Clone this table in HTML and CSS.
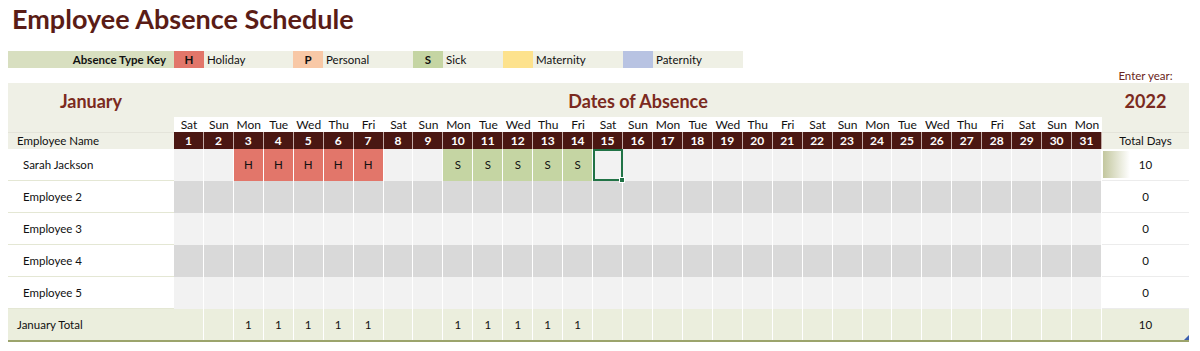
FILE: index.html
```html
<!DOCTYPE html>
<html>
<head>
<meta charset="utf-8">
<link rel="stylesheet" href="styles.css">
</head>
<body>
<h1 class="title">Employee Absence Schedule</h1>
<div class="key">
  <div class="key-label">Absence Type Key</div>
  <div class="sw hol">H</div><div class="kt w89">Holiday</div>
  <div class="sw per">P</div><div class="kt">Personal</div>
  <div class="sw sick">S</div><div class="kt w60">Sick</div>
  <div class="sw mat"></div><div class="kt">Maternity</div>
  <div class="sw pat"></div><div class="kt">Paternity</div>
</div>
<div class="sheet">
  <div class="row yearrow"><div class="yl">Enter year:</div></div>
  <div class="panel">
    <div class="row head">
      <div class="month">January</div>
      <div class="dtitle">Dates of Absence</div>
      <div class="year">2022</div>
    </div>
    <div class="row dow">
      <div class="pn"></div>
      <div class="d">Sat</div><div class="d">Sun</div><div class="d">Mon</div><div class="d">Tue</div><div class="d">Wed</div><div class="d">Thu</div><div class="d">Fri</div>
      <div class="d">Sat</div><div class="d">Sun</div><div class="d">Mon</div><div class="d">Tue</div><div class="d">Wed</div><div class="d">Thu</div><div class="d">Fri</div>
      <div class="d">Sat</div><div class="d">Sun</div><div class="d">Mon</div><div class="d">Tue</div><div class="d">Wed</div><div class="d">Thu</div><div class="d">Fri</div>
      <div class="d">Sat</div><div class="d">Sun</div><div class="d">Mon</div><div class="d">Tue</div><div class="d">Wed</div><div class="d">Thu</div><div class="d">Fri</div>
      <div class="d">Sat</div><div class="d">Sun</div><div class="d">Mon</div>
      <div class="pn"></div>
    </div>
    <div class="row nums">
      <div class="lbl">Employee Name</div>
      <div class="n">1</div><div class="n">2</div><div class="n">3</div><div class="n">4</div><div class="n">5</div><div class="n">6</div><div class="n">7</div>
      <div class="n">8</div><div class="n">9</div><div class="n">10</div><div class="n">11</div><div class="n">12</div><div class="n">13</div><div class="n">14</div>
      <div class="n">15</div><div class="n">16</div><div class="n">17</div><div class="n">18</div><div class="n">19</div><div class="n">20</div><div class="n">21</div>
      <div class="n">22</div><div class="n">23</div><div class="n">24</div><div class="n">25</div><div class="n">26</div><div class="n">27</div><div class="n">28</div>
      <div class="n">29</div><div class="n">30</div><div class="n">31</div>
      <div class="tlbl">Total Days</div>
    </div>
  </div>
  <div class="row data light">
    <div class="name">Sarah Jackson</div>
    <div class="c"></div><div class="c"></div><div class="c hol">H</div><div class="c hol">H</div><div class="c hol">H</div><div class="c hol">H</div><div class="c hol">H</div>
    <div class="c"></div><div class="c"></div><div class="c sick">S</div><div class="c sick">S</div><div class="c sick">S</div><div class="c sick">S</div><div class="c sick">S</div>
    <div class="c sel"><span class="handle"></span></div><div class="c"></div><div class="c"></div><div class="c"></div><div class="c"></div><div class="c"></div><div class="c"></div>
    <div class="c"></div><div class="c"></div><div class="c"></div><div class="c"></div><div class="c"></div><div class="c"></div><div class="c"></div>
    <div class="c"></div><div class="c"></div><div class="c"></div>
    <div class="tot bar">10</div>
  </div>
  <div class="row data dark">
    <div class="name">Employee 2</div>
    <div class="c"></div><div class="c"></div><div class="c"></div><div class="c"></div><div class="c"></div><div class="c"></div><div class="c"></div>
    <div class="c"></div><div class="c"></div><div class="c"></div><div class="c"></div><div class="c"></div><div class="c"></div><div class="c"></div>
    <div class="c"></div><div class="c"></div><div class="c"></div><div class="c"></div><div class="c"></div><div class="c"></div><div class="c"></div>
    <div class="c"></div><div class="c"></div><div class="c"></div><div class="c"></div><div class="c"></div><div class="c"></div><div class="c"></div>
    <div class="c"></div><div class="c"></div><div class="c"></div>
    <div class="tot">0</div>
  </div>
  <div class="row data light">
    <div class="name">Employee 3</div>
    <div class="c"></div><div class="c"></div><div class="c"></div><div class="c"></div><div class="c"></div><div class="c"></div><div class="c"></div>
    <div class="c"></div><div class="c"></div><div class="c"></div><div class="c"></div><div class="c"></div><div class="c"></div><div class="c"></div>
    <div class="c"></div><div class="c"></div><div class="c"></div><div class="c"></div><div class="c"></div><div class="c"></div><div class="c"></div>
    <div class="c"></div><div class="c"></div><div class="c"></div><div class="c"></div><div class="c"></div><div class="c"></div><div class="c"></div>
    <div class="c"></div><div class="c"></div><div class="c"></div>
    <div class="tot">0</div>
  </div>
  <div class="row data dark">
    <div class="name">Employee 4</div>
    <div class="c"></div><div class="c"></div><div class="c"></div><div class="c"></div><div class="c"></div><div class="c"></div><div class="c"></div>
    <div class="c"></div><div class="c"></div><div class="c"></div><div class="c"></div><div class="c"></div><div class="c"></div><div class="c"></div>
    <div class="c"></div><div class="c"></div><div class="c"></div><div class="c"></div><div class="c"></div><div class="c"></div><div class="c"></div>
    <div class="c"></div><div class="c"></div><div class="c"></div><div class="c"></div><div class="c"></div><div class="c"></div><div class="c"></div>
    <div class="c"></div><div class="c"></div><div class="c"></div>
    <div class="tot">0</div>
  </div>
  <div class="row data light">
    <div class="name">Employee 5</div>
    <div class="c"></div><div class="c"></div><div class="c"></div><div class="c"></div><div class="c"></div><div class="c"></div><div class="c"></div>
    <div class="c"></div><div class="c"></div><div class="c"></div><div class="c"></div><div class="c"></div><div class="c"></div><div class="c"></div>
    <div class="c"></div><div class="c"></div><div class="c"></div><div class="c"></div><div class="c"></div><div class="c"></div><div class="c"></div>
    <div class="c"></div><div class="c"></div><div class="c"></div><div class="c"></div><div class="c"></div><div class="c"></div><div class="c"></div>
    <div class="c"></div><div class="c"></div><div class="c"></div>
    <div class="tot">0</div>
  </div>
  <div class="row data total">
    <div class="tname">January Total</div>
    <div class="c"></div><div class="c"></div><div class="c">1</div><div class="c">1</div><div class="c">1</div><div class="c">1</div><div class="c">1</div>
    <div class="c"></div><div class="c"></div><div class="c">1</div><div class="c">1</div><div class="c">1</div><div class="c">1</div><div class="c">1</div>
    <div class="c"></div><div class="c"></div><div class="c"></div><div class="c"></div><div class="c"></div><div class="c"></div><div class="c"></div>
    <div class="c"></div><div class="c"></div><div class="c"></div><div class="c"></div><div class="c"></div><div class="c"></div><div class="c"></div>
    <div class="c"></div><div class="c"></div><div class="c"></div>
    <div class="ttot">10<span class="corner"></span></div>
  </div>
</div>
</body>
</html>
```
FILE: styles.css
```css
* { box-sizing: border-box; }
body {
  margin: 0;
  background: #fff;
  font-family: Lato, "Open Sans", sans-serif;
  color: #111;
  font-size: 11.5px;
}
.title {
  margin: 0;
  height: 51px;
  padding: 3px 0 0 12px;
  font-size: 27px;
  font-weight: 700;
  color: #5a1c16;
  line-height: 32px;
}
.key {
  display: flex;
  height: 17px;
  margin-left: 8px;
  line-height: 17px;
  font-size: 11.5px;
}
.key-label {
  width: 166px;
  background: #d8dfc0;
  text-align: right;
  font-weight: 700;
  padding-right: 8px;
}
.sw { width: 30px; text-align: center; font-weight: 700; }
.kt { width: 90px; background: #eff0e5; padding-left: 3px; }
.kt.w89 { width: 89px; }
.kt.w60 { width: 60px; }
.hol { background: #e2766a; }
.per { background: #f8c8a6; }
.sick { background: #c5d5a3; }
.mat { background: #fde28d; }
.pat { background: #b8c3e2; }

.sheet { margin-left: 8px; width: 1181px; }
.row {
  display: grid;
  grid-template-columns: 166px repeat(31, 1fr) 87px;
}
.yearrow { height: 15px; }
.yl {
  grid-column: 33;
  text-align: center;
  color: #6a2520;
  font-size: 11.5px;
  line-height: 15px;
}
.panel { background: #eff0e6; }
.head { height: 34px; align-items: center; }
.month, .dtitle, .year {
  font-size: 18px;
  font-weight: 700;
  color: #7b2a20;
  text-align: center;
}
.month { padding-top: 2px; }
.dtitle { grid-column: 2 / span 31; padding-top: 2px; }
.year { padding-top: 2px; }
.dow { height: 15px; }
.dow .d {
  background: #fff;
  text-align: center;
  line-height: 15px;
  font-size: 12px;
}
.nums { height: 17px; }
.lbl, .tlbl { font-size: 11.5px; border-top: 1px solid #e4e4da; line-height: 16px; }
.lbl { padding-left: 9px; }
.tlbl { text-align: center; }
.n {
  background: #4a1712;
  color: #fff;
  font-weight: 700;
  font-size: 12px;
  text-align: center;
  line-height: 17px;
  border-right: 1px solid #c2aaa6;
}
.data { height: 32px; }
.name {
  background: #fff;
  padding-left: 15px;
  line-height: 31px;
  border-bottom: 1px solid #e4e7d4;
}
.c {
  border-right: 1px solid #fff;
  text-align: center;
  line-height: 32px;
  position: relative;
}
.light .c { background: #f2f2f2; }
.dark .c { background: #d9d9d9; }
.light .c.hol { background: #e2766a; }
.light .c.sick { background: #c5d5a3; }
.c.sel { border: 2px solid #217346; z-index: 2; }
.handle {
  position: absolute;
  right: -4px;
  bottom: -4px;
  width: 6px;
  height: 6px;
  background: #217346;
  border: 1px solid #fff;
}
.tot {
  background: #fff;
  text-align: center;
  line-height: 31px;
  border-bottom: 1px solid #ececec;
}
.tot.bar {
  background: linear-gradient(to right, #c3c79e, #fff) no-repeat 1px 2px / 27px 27px, #fff;
}
.total { background: #ebeedd; border-bottom: 2px solid #9ca46c; height: 33px; }
.total .c { background: #ebeedd; line-height: 31px; }
.tname { padding-left: 9px; line-height: 31px; }
.ttot { text-align: center; line-height: 31px; position: relative; }
.corner {
  position: absolute;
  right: 0;
  bottom: 0;
  width: 0;
  height: 0;
  border-left: 5px solid transparent;
  border-bottom: 5px solid #3b5fb0;
}
```
